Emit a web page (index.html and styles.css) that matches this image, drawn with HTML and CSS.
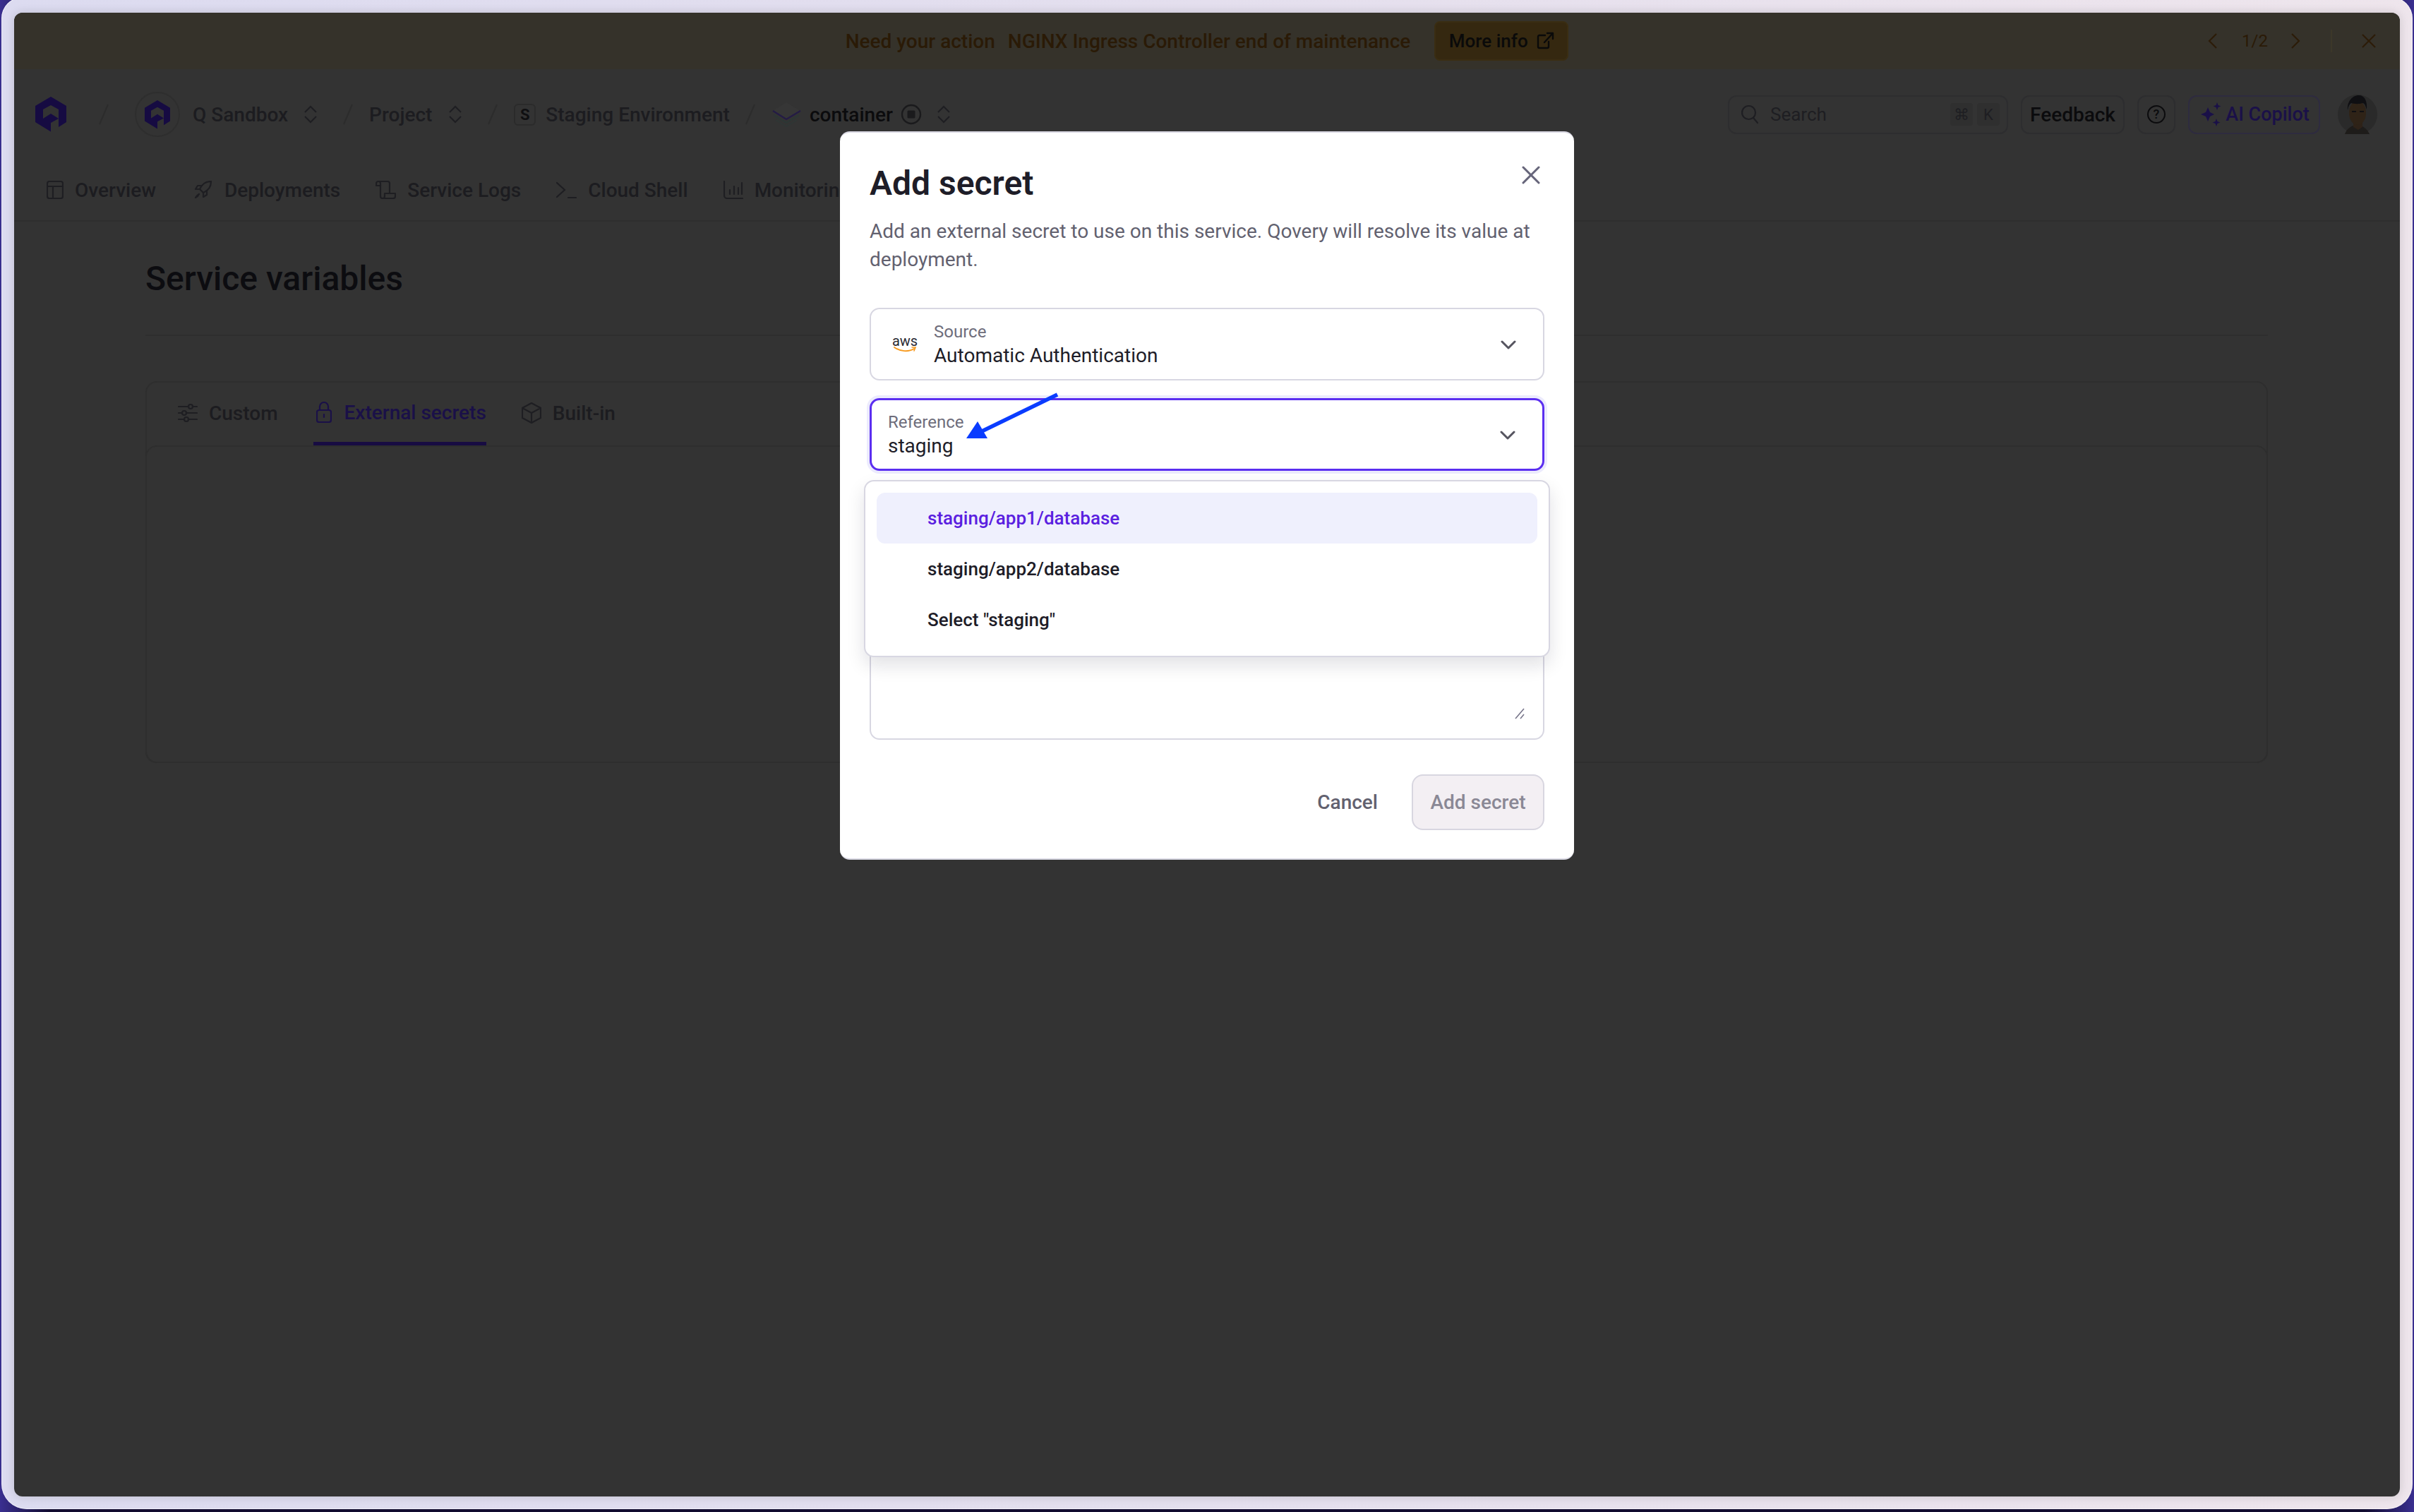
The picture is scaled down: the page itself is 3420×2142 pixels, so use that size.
FILE: index.html
```html
<!DOCTYPE html>
<html lang="en">
<head>
<meta charset="utf-8">
<title>Add secret</title>
<link rel="stylesheet" href="styles.css">
</head>
<body>
<div class="frame">
  <div class="panel">
    <div class="banner">
      <div></div>
      <div class="banner-main">
        <span class="banner-strong">Need your action</span>
        <span class="banner-text">NGINX Ingress Controller end of maintenance</span>
        <span class="more-btn">More info
          <svg width="26" height="26" viewBox="0 0 26 26" fill="none" stroke="#0a0a0a" stroke-width="2.4" stroke-linecap="round" stroke-linejoin="round"><path d="M13 5H5a2 2 0 0 0-2 2v14a2 2 0 0 0 2 2h11a2 2 0 0 0 2-2v-7"/><path d="M12 15 24 2M16 2h8v8"/></svg>
        </span>
      </div>
      <div class="banner-ctrl">
        <svg width="14" height="24" viewBox="0 0 14 24" fill="none" stroke="#2c1c08" stroke-width="2.2"><path d="M12 2 2 12l10 10"/></svg>
        <span class="pager">1/2</span>
        <svg width="14" height="24" viewBox="0 0 14 24" fill="none" stroke="#2c1c08" stroke-width="2.2"><path d="M2 2l10 10L2 22"/></svg>
        <span class="banner-sep"></span>
        <svg width="20" height="20" viewBox="0 0 20 20" fill="none" stroke="#2c1c08" stroke-width="2.2"><path d="M1 1l18 18M19 1 1 19"/></svg>
      </div>
    </div>

    <header class="topbar">
      <svg class="logo" width="44" height="50" viewBox="0 0 44 50"><path fill-rule="evenodd" d="M22 0 44 13V36L33 43V31L22 37V49.5L0 36V13ZM22 12 33 18V31L22 24 11 31V18Z"/></svg>
      <svg class="slash slash-a" width="16" height="30" viewBox="0 0 16 30"><path d="M14 1 2 29"/></svg>
      <span class="org-circle"><svg class="logo" width="36" height="41" viewBox="0 0 44 50"><path fill-rule="evenodd" d="M22 0 44 13V36L33 43V31L22 37V49.5L0 36V13ZM22 12 33 18V31L22 24 11 31V18Z"/></svg></span>
      <span class="crumb crumb-org">Q Sandbox</span>
      <svg class="updown updown-first" width="20" height="26" viewBox="0 0 20 26"><path d="M2 10 10 2l8 8M2 16l8 8 8-8"/></svg>
      <svg class="slash slash-b" width="16" height="30" viewBox="0 0 16 30"><path d="M14 1 2 29"/></svg>
      <span class="crumb crumb-next">Project</span>
      <svg class="updown" width="20" height="26" viewBox="0 0 20 26"><path d="M2 10 10 2l8 8M2 16l8 8 8-8"/></svg>
      <svg class="slash slash-b" width="16" height="30" viewBox="0 0 16 30"><path d="M14 1 2 29"/></svg>
      <span class="env-badge">S</span>
      <span class="crumb crumb-env">Staging Environment</span>
      <svg class="slash slash-c" width="16" height="30" viewBox="0 0 16 30"><path d="M14 1 2 29"/></svg>
      <svg class="layers" width="41" height="36" viewBox="0 0 41 36" fill="none"><path d="M20 1 40 13 20 25 1 13Z" fill="#363636"/><path d="M1 13l19 12 20-12" stroke="#241b45" stroke-width="2.2"/><path d="M2 19l18 11 18-11" stroke="#2c3634" stroke-width="2.2"/><path d="M5 26l15 9 15-9" stroke="#2f3635" stroke-width="2"/></svg>
      <span class="crumb crumb-current">container</span>
      <svg class="status" width="30" height="30" viewBox="0 0 30 30"><circle cx="15" cy="15" r="13" fill="none" stroke="#1a1a1c" stroke-width="2.4"/><rect x="9.5" y="9.5" width="11" height="11" rx="1.5" fill="#1a1a1c"/></svg>
      <svg class="updown updown-last" width="20" height="26" viewBox="0 0 20 26"><path d="M2 10 10 2l8 8M2 16l8 8 8-8"/></svg>

      <div class="top-right">
        <div class="search">
          <svg width="26" height="28" viewBox="0 0 26 28" fill="none" stroke="#1e1e22" stroke-width="2.2" stroke-linecap="round"><circle cx="11.5" cy="11.5" r="9.5"/><path d="M18 19l6 7"/></svg>
          <span class="search-text">Search</span>
          <span class="kbd">⌘</span>
          <span class="kbd">K</span>
        </div>
        <span class="top-btn feedback-btn">Feedback</span>
        <span class="top-btn help-btn"><span class="help-icon">?</span></span>
        <span class="top-btn ai-btn">
          <svg width="30" height="34" viewBox="0 0 30 34" fill="#1a1048"><path d="M11 7l3 7 6 3-6 3-3 7-3-7-7-3 7-3Z"/><path d="M24 0l1.5 4 4 1.5-4 1.5L24 11l-1.5-4-4-1.5 4-1.5Z"/><path d="M23 23l1.5 4 4 1.5-4 1.5-1.5 4-1.5-4-4-1.5 4-1.5Z"/></svg>
          AI Copilot
        </span>
        <svg class="avatar" width="56" height="56" viewBox="0 0 56 56"><circle cx="28" cy="28" r="28" fill="#2a2a2a"/><path d="M10 56c3-9 10-11 14-13l6 0c5 2 11 4 15 13Z" fill="#1e1c1a"/><path d="M22 38h13v8l-6 4-7-4Z" fill="#2e2218"/><ellipse cx="28" cy="26" rx="12" ry="17" fill="#2f2317"/><path d="M14 22C13 8 22 1 30 1c8 0 12 8 11 20-2-6-3-9-6-9-6 2-12 1-16 0-3 2-4 5-5 10Z" fill="#0f0f12"/><path d="M20 24h6M31 24h6" stroke="#0f0f12" stroke-width="2"/></svg>
      </div>
    </header>

    <nav class="service-tabs">
      <span class="s-tab"><svg width="24" height="26" viewBox="0 0 24 26" fill="none"><rect x="1" y="1" width="22" height="24" rx="3"/><path d="M1 8h22M9 8v17"/></svg>Overview</span>
      <span class="s-tab"><svg width="31" height="26" viewBox="0 0 31 26" fill="none"><path d="M28 1c-8 0-13 4-16 11l5 5c7-3 11-8 11-16Z"/><path d="M12 12H6l3-5h6M17 17v6l5-3v-6M11 19c-2 1-4 3-5 5 2-1 4-3 5-5"/></svg>Deployments</span>
      <span class="s-tab"><svg width="29" height="26" viewBox="0 0 29 26" fill="none"><path d="M1 4a3 3 0 0 1 3-3h13a3 3 0 0 1 3 3v14M4 1a3 3 0 0 1 3 3v3H1V4"/><path d="M7 7v15a3 3 0 0 0 3 3h15a3 3 0 0 0 3-3v-4H13v4a3 3 0 0 1-3 3"/></svg>Service Logs</span>
      <span class="s-tab"><svg width="29" height="26" viewBox="0 0 29 26" fill="none"><path d="M1 3l11 10L1 23M17 24h11"/></svg>Cloud Shell</span>
      <span class="s-tab"><svg width="28" height="26" viewBox="0 0 28 26" fill="none"><path d="M1 1v20a4 4 0 0 0 4 4h22M9 19v-6M15 19V8M21 19v-9M26 19V3"/></svg>Monitoring</span>
    </nav>

    <main class="content">
      <h1 class="page-title">Service variables</h1>
      <section class="vars-card">
        <div class="vars-tabs">
          <span class="v-tab"><svg width="28" height="26" viewBox="0 0 28 26" fill="none"><path d="M1 4h14M21 4h6M1 13h5M12 13h15M1 22h8M15 22h12"/><circle cx="18" cy="4" r="3"/><circle cx="9" cy="13" r="3"/><circle cx="12" cy="22" r="3"/></svg>Custom</span>
          <span class="v-tab v-tab-active"><svg width="22" height="30" viewBox="0 0 22 30" fill="none"><rect x="1" y="12" width="20" height="17" rx="3"/><path d="M5 12V7a6 6 0 0 1 12 0v5M11 18v4"/></svg>External secrets</span>
          <span class="v-tab"><svg width="28" height="30" viewBox="0 0 28 30" fill="none"><path d="M14 1 27 8v14l-13 7L1 22V8ZM1 8l13 7 13-7M14 15v14"/></svg>Built-in</span>
        </div>
        <div class="vars-body"></div>
      </section>
    </main>

    <div class="modal" role="dialog">
      <h2 class="modal-title">Add secret</h2>
      <svg class="modal-close" width="26" height="26" viewBox="0 0 26 26" fill="none" stroke="#66657a" stroke-width="3" stroke-linecap="round"><path d="M2 2l22 22M24 2 2 24"/></svg>
      <p class="modal-desc">Add an external secret to use on this service. Qovery will resolve its value at deployment.</p>

      <div class="field field-source">
        <span class="aws"><span class="aws-word">aws</span><svg width="32" height="10" viewBox="0 0 32 10" fill="none"><path d="M1 2c8 6 20 7 28 2" stroke="#f79a1f" stroke-width="2" stroke-linecap="round"/><path d="M26 2l5 0-2 5" stroke="#f79a1f" stroke-width="1.6" stroke-linecap="round"/></svg></span>
        <span class="field-stack"><span class="field-label">Source</span><span class="field-value">Automatic Authentication</span></span>
        <svg class="chev" width="22" height="14" viewBox="0 0 22 14" fill="none"><path d="M2 2l9 9 9-9"/></svg>
      </div>

      <div class="field field-ref">
        <span class="field-stack"><span class="field-label">Reference</span><span class="field-value">staging</span></span>
        <svg class="chev" width="22" height="14" viewBox="0 0 22 14" fill="none"><path d="M2 2l9 9 9-9"/></svg>
      </div>

      <div class="field-text">
        <svg class="resize" width="14" height="16" viewBox="0 0 14 16" fill="none" stroke="#77758a" stroke-width="1.6"><path d="M1 15 13 1M8 15l5-6"/></svg>
      </div>

      <div class="modal-foot">
        <span class="btn-cancel">Cancel</span>
        <span class="btn-add">Add secret</span>
      </div>

      <ul class="dropdown">
        <li class="opt opt-active">staging/app1/database</li>
        <li class="opt">staging/app2/database</li>
        <li class="opt">Select "staging"</li>
      </ul>

      <svg class="annot" width="136" height="70" viewBox="0 0 136 70"><path d="M133 3 26 55" stroke="#0a3cff" stroke-width="5.5" fill="none"/><path d="M4 65h30L20 41Z" fill="#0a3cff"/></svg>
    </div>
  </div>
</div>
</body>
</html>
```
FILE: styles.css
```css
* { box-sizing: border-box; }
html, body { margin: 0; padding: 0; }
body {
  height: 2142px;
  overflow: hidden;
  font-family: Roboto, "Liberation Sans", sans-serif;
  background: linear-gradient(90deg, #3a2f90 0, #120c30 70px, #120c30 3350px, #3a2f90 3420px);
}
.frame {
  margin: -4px 2px 0;
  height: 2142px;
  padding: 22px 18px 18px;
  border-radius: 30px 30px 36px 36px;
  background: linear-gradient(90deg, #dcdbf0, #e4dfee 50%, #eee5ec);
  box-shadow: inset 0 0 0 1px rgba(255,255,255,.5);
}
.panel {
  position: relative;
  height: 2102px;
  background: #333333;
  border-radius: 12px;
  box-shadow: 0 0 14px rgba(0,0,0,.14);
  display: flex;
  flex-direction: column;
  overflow: hidden;
}

/* banner */
.banner {
  height: 80px;
  flex: none;
  background: #35322a;
  display: grid;
  grid-template-columns: 1fr auto 1fr;
  align-items: center;
  font-size: 28px;
  color: #2a1a06;
}
.banner-main { display: flex; align-items: center; }
.banner-strong { font-weight: 500; margin-right: 18px; }
.banner-text { font-weight: 500; margin-right: 34px; }
.more-btn {
  height: 56px;
  width: 190px;
  background: #352810;
  border: 2px solid #3a2d12;
  border-radius: 8px;
  display: flex;
  align-items: center;
  justify-content: center;
  gap: 11px;
  color: #0a0a0a;
  font-size: 26px;
  font-weight: 500;
}
.banner-ctrl { display: flex; align-items: center; justify-content: flex-end; padding-right: 34px; }
.pager { margin: 0 32px 0 34px; font-size: 24px; }
.banner-sep { width: 2px; height: 32px; background: #3d3829; margin: 0 42px 0 43px; }

/* top bar */
.topbar {
  height: 128px;
  flex: none;
  display: flex;
  align-items: center;
  padding: 0 32px 0 30px;
}
.logo { fill: #160b42; flex: none; }
.slash { flex: none; fill: none; stroke: #2c2c2c; stroke-width: 2; }
.slash-a { margin: 0 36px 0 45px; }
.slash-b { margin: 0 22px 0 35px; }
.slash-c { margin: 0 23px 0 21px; }
.org-circle {
  width: 64px; height: 64px; border-radius: 50%;
  border: 2px solid #2e2e2e;
  display: flex; align-items: center; justify-content: center;
  flex: none;
}
.crumb { font-size: 28px; font-weight: 500; color: #1c1c20; white-space: nowrap; }
.crumb-org { margin-left: 18px; }
.crumb-env { margin-left: 14px; }
.crumb-current { margin-left: 12px; color: #0b0b0d; }
.updown { flex: none; margin-left: 23px; fill: none; stroke: #1e1e22; stroke-width: 2; }
.updown-first { margin-left: 22px; }
.updown-last { margin-left: 21px; }
.env-badge {
  width: 31px; height: 31px; border: 2px solid #2b2b2b; border-radius: 6px;
  display: flex; align-items: center; justify-content: center;
  font-size: 22px; font-weight: 700; color: #0f0f11; flex: none;
}
.layers { flex: none; }
.status { flex: none; margin-left: 11px; }
.top-right { margin-left: auto; display: flex; align-items: center; }
.search {
  width: 397px; height: 55px;
  border: 2px solid #2d2d2f; border-radius: 12px;
  display: flex; align-items: center;
  padding: 0 10px 0 16px;
}
.search-text { margin-left: 16px; font-size: 26px; color: #1e1e22; margin-right: auto; }
.kbd {
  width: 32px; height: 32px; margin-left: 6px;
  background: #2f2f2f; border-radius: 4px;
  display: flex; align-items: center; justify-content: center;
  font-size: 22px; color: #1e1e22;
}
.top-btn {
  margin-left: 18px; height: 55px;
  border: 2px solid #2d2d2f; border-radius: 12px;
  display: flex; align-items: center; justify-content: center;
  font-size: 28px; font-weight: 500; color: #0b0b0d;
}
.feedback-btn { width: 147px; }
.help-btn { width: 54px; }
.help-icon {
  width: 26px; height: 26px; border: 2.4px solid #0b0b0d; border-radius: 50%;
  display: flex; align-items: center; justify-content: center;
  font-size: 18px; line-height: 1;
}
.ai-btn { width: 187px; gap: 6px; color: #1a1048; border-color: #2e2b3f; font-size: 27px; padding-left: 2px; }
.avatar { margin-left: 25px; flex: none; }

/* service tabs */
.service-tabs {
  height: 88px;
  flex: none;
  display: flex;
  align-items: center;
  gap: 50px;
  padding-left: 46px;
  border-bottom: 2px solid #2e2e2e;
}
.s-tab {
  display: flex; align-items: center; gap: 16px;
  font-size: 28px; font-weight: 500; color: #1c1c20; white-space: nowrap;
}
.s-tab svg { stroke: #1e1e22; stroke-width: 2.2; stroke-linecap: round; stroke-linejoin: round; flex: none; }

/* content */
.content { padding: 58px 187px 0 186px; }
.page-title {
  margin: 0;
  font-size: 48px; line-height: 46px; font-weight: 500; color: #0c0c10;
  padding-bottom: 56px;
  border-bottom: 2px solid #2e2e2e;
}
.vars-card {
  margin-top: 64px;
  height: 541px;
  border: 2px solid #2e2e2e;
  border-radius: 16px;
  display: flex;
  flex-direction: column;
}
.vars-tabs { height: 89px; flex: none; display: flex; padding: 0 0 0 44px; }
.v-tab {
  display: flex; align-items: center; gap: 16px;
  margin-right: 50px;
  padding-bottom: 3px;
  font-size: 28px; font-weight: 500; color: #1c1c20;
}
.v-tab svg { stroke: #1e1e22; stroke-width: 2.2; stroke-linecap: round; stroke-linejoin: round; }
.v-tab-active {
  color: #1a1048;
  gap: 18px;
  padding: 0 0 0 4px;
  border-bottom: 5px solid #170c42;
}
.v-tab-active svg { stroke: #1a1048; }
.vars-body { flex: 1; margin: 0 -2px -2px; border: 2px solid #2e2e2e; border-radius: 16px; }

/* modal */
.modal {
  position: absolute;
  left: 1170px;
  top: 168px;
  width: 1040px;
  padding: 44px 42px 40px;
  background: #fff;
  border-radius: 14px;
  border-top: 2px solid #d8d7e2;
  border-bottom: 2px solid #d8d7e2;
}
.modal-title { margin: 0; font-size: 48px; line-height: 56px; font-weight: 600; color: #1e1d28; }
.modal-close { position: absolute; right: 48px; top: 47px; }
.modal-desc { margin: 20px 0 48px; font-size: 28px; line-height: 40px; color: #62616f; }
.field {
  height: 103px;
  border: 2px solid #d8d7e2;
  border-radius: 14px;
  display: flex;
  align-items: center;
  padding-right: 38px;
}
.field-source { padding-left: 32px; }
.field-ref {
  margin-top: 25px;
  padding-left: 23px;
  border: 3px solid #5b2ef0;
  box-shadow: 0 0 0 4px #ecebfd;
}
.aws { width: 32px; margin-right: 25px; display: flex; flex-direction: column; align-items: center; flex: none; }
.aws-word { font-size: 20px; line-height: 16px; color: #2a2a33; }
.aws svg { margin-top: -1px; }
.field-stack { display: flex; flex-direction: column; }
.field-label { font-size: 24px; line-height: 32px; color: #6e6d7b; }
.field-value { font-size: 28px; line-height: 36px; color: #1e1d28; }
.chev { margin: 3px 0 0 auto; stroke: #55545f; stroke-width: 3; stroke-linecap: round; stroke-linejoin: round; flex: none; }
.field-text {
  position: relative;
  margin-top: 25px;
  height: 356px;
  border: 2px solid #d8d7e2;
  border-radius: 14px;
}
.resize { position: absolute; right: 26px; bottom: 27px; }
.modal-foot { margin-top: 49px; display: flex; justify-content: flex-end; align-items: center; gap: 48px; }
.btn-cancel { font-size: 28px; font-weight: 500; color: #62616f; }
.btn-add {
  width: 188px; height: 79px;
  display: flex; align-items: center; justify-content: center;
  background: #f3eff3; border: 2px solid #d8d6e0; border-radius: 16px;
  font-size: 28px; font-weight: 500; color: #8a8895;
}
.dropdown {
  position: absolute;
  left: 34px;
  top: 492px;
  width: 972px;
  height: 251px;
  margin: 0;
  padding: 16px;
  list-style: none;
  background: #fff;
  border: 2px solid #d8d7e2;
  border-radius: 14px;
  box-shadow: 0 12px 26px rgba(20,20,40,.12);
}
.opt {
  height: 72px;
  padding-left: 72px;
  display: flex; align-items: center;
  font-size: 26px; font-weight: 500; color: #1e1d28;
  border-radius: 12px;
}
.opt-active { background: #eff0fd; color: #5a20e0; }
.annot { position: absolute; left: 175px; top: 368px; }
```
